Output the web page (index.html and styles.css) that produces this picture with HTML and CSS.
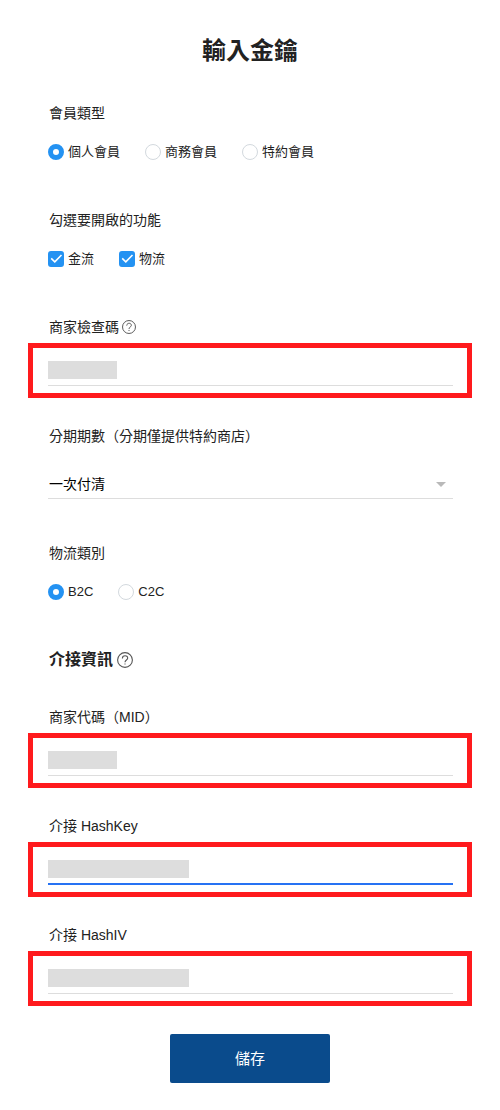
FILE: index.html
```html
<!DOCTYPE html>
<html lang="zh-Hant">
<head>
    <meta charset="UTF-8">
    <meta name="viewport" content="width=device-width, initial-scale=1.0">
    <title>輸入金鑰</title>
    <link rel="stylesheet" href="styles.css">
</head>
<body>

    <main>
        <form class="key-form">
            <h1>輸入金鑰</h1>

            <fieldset class="group">
                <legend>會員類型</legend>
                <div class="options">
                    <label class="option"><input type="radio" name="member" checked>個人會員</label>
                    <label class="option"><input type="radio" name="member">商務會員</label>
                    <label class="option"><input type="radio" name="member">特約會員</label>
                </div>
            </fieldset>

            <fieldset class="group">
                <legend>勾選要開啟的功能</legend>
                <div class="options">
                    <label class="option">
                        <span class="check">
                            <input type="checkbox" name="payment" checked>
                            <svg viewBox="0 0 16 16"><path d="M3.2 7.4 L6.8 10.8 L13.5 4"/></svg>
                        </span>金流
                    </label>
                    <label class="option">
                        <span class="check">
                            <input type="checkbox" name="logistics" checked>
                            <svg viewBox="0 0 16 16"><path d="M3.2 7.4 L6.8 10.8 L13.5 4"/></svg>
                        </span>物流
                    </label>
                </div>
            </fieldset>

            <div class="field">
                <div class="field-title">
                    <label for="check-code">商家檢查碼</label>
                    <button type="button" class="help" aria-label="說明">
                        <svg viewBox="0 0 16 16"><circle cx="8" cy="8" r="7.4"/><path d="M5.4 6.4 C5.4 2.9 10.7 2.9 10.7 6.1 C10.7 8 8 8 8 10.2"/><path d="M8 11.4 V12.6"/></svg>
                    </button>
                </div>
                <div class="highlight">
                    <input type="text" id="check-code">
                    <span class="mask"></span>
                </div>
            </div>

            <div class="field select-field">
                <label for="installment">分期期數<span class="paren" lang="ja">（</span>分期僅提供特約商店<span class="paren" lang="ja">）</span></label>
                <div class="select-box">
                    <select id="installment">
                        <option>一次付清</option>
                    </select>
                    <svg class="arrow" viewBox="0 0 10 5"><path d="M0 0 H10 L5 5 Z"/></svg>
                </div>
            </div>

            <fieldset class="group">
                <legend>物流類別</legend>
                <div class="options">
                    <label class="option"><input type="radio" name="shipping" checked>B2C</label>
                    <label class="option"><input type="radio" name="shipping">C2C</label>
                </div>
            </fieldset>

            <div class="section-title">
                <h2>介接資訊</h2>
                <button type="button" class="help help-large" aria-label="說明">
                    <svg viewBox="0 0 16 16"><circle cx="8" cy="8" r="7.4"/><path d="M5.4 6.4 C5.4 2.9 10.7 2.9 10.7 6.1 C10.7 8 8 8 8 10.2"/><path d="M8 11.4 V12.6"/></svg>
                </button>
            </div>

            <div class="field">
                <label for="mid">商家代碼<span class="paren" lang="ja">（</span>MID<span class="paren" lang="ja">）</span></label>
                <div class="highlight">
                    <input type="text" id="mid">
                    <span class="mask"></span>
                </div>
            </div>

            <div class="field">
                <label for="hash-key">介接 HashKey</label>
                <div class="highlight">
                    <input type="text" id="hash-key" class="active">
                    <span class="mask mask-long"></span>
                </div>
            </div>

            <div class="field">
                <label for="hash-iv">介接 HashIV</label>
                <div class="highlight">
                    <input type="text" id="hash-iv">
                    <span class="mask mask-long"></span>
                </div>
            </div>

            <button type="submit" class="save">儲存</button>
        </form>
    </main>

</body>
</html>
```

FILE: styles.css
```css
* {
    box-sizing: border-box;
}

body {
    margin: 0;
    background: #fff;
    color: #222;
    font-family: "Liberation Sans", "Noto Sans CJK TC", sans-serif;
    font-size: 14px;
    line-height: 20px;
}

input, select, button {
    font: inherit;
    color: inherit;
}

.key-form {
    display: flex;
    flex-direction: column;
    padding: 35px 28px 27px;
}

h1 {
    margin: 0 0 36px;
    font-size: 24px;
    font-weight: 600;
    line-height: 32px;
    text-align: center;
}

h2 {
    margin: 0;
    font-size: 16px;
    font-weight: 600;
    line-height: 20px;
}

/* Radio and checkbox groups */
.group {
    margin: 0 0 48px;
    padding: 0 20px;
    border: none;
}

legend {
    padding: 0 1px;
}

.options {
    display: flex;
    gap: 25px;
    margin-top: 19px;
}

.option {
    display: flex;
    align-items: center;
    gap: 4px;
    font-size: 13px;
}

.option input {
    appearance: none;
    width: 16px;
    height: 16px;
    margin: 0;
    border: 1px solid #d3d9de;
    border-radius: 50%;
    background: #fff;
}

.option input:checked {
    border: 5px solid #2492f2;
}

.check {
    display: grid;
}

.check input, .check svg {
    grid-area: 1 / 1;
    width: 16px;
    height: 16px;
}

.check input {
    border-radius: 3px;
}

.check input:checked {
    background: #2492f2;
}

.check svg {
    fill: none;
    stroke: #fff;
    stroke-width: 1.6;
    pointer-events: none;
}

/* Text fields */
.field {
    display: flex;
    flex-direction: column;
    margin-bottom: 28px;
}

.field > label, .field-title, .section-title {
    padding: 0 21px;
}

.field-title, .section-title {
    display: flex;
    align-items: center;
    gap: 4px;
}

.field-title {
    gap: 3px;
}

.section-title {
    margin-bottom: 37px;
}

/* Brackets sit against the text they enclose */
.paren {
    font-family: "Noto Sans CJK JP", sans-serif;
    line-height: 1;
}

.help {
    display: flex;
    width: 14px;
    height: 14px;
    padding: 0;
    border: none;
    background: none;
}

.help-large {
    width: 16px;
    height: 16px;
}

.help svg {
    width: 100%;
    fill: none;
    stroke: #555;
    stroke-width: 1.1;
}

.highlight {
    position: relative;
    display: flex;
    margin-top: 6px;
    padding: 0 14px 7px 15px;
    border: 5px solid #ff1a1d;
}

.highlight input {
    width: 100%;
    height: 38px;
    padding: 0;
    border: none;
    border-bottom: 1px solid #ddd;
    border-radius: 0;
    outline: none;
    background: none;
}

.highlight input.active {
    border-bottom: 2px solid #2672f3;
}

.mask {
    position: absolute;
    top: 13px;
    left: 15px;
    width: 69px;
    height: 18px;
    background: #ddd;
}

.mask-long {
    width: 141px;
}

/* Drop-down */
.select-field {
    margin-bottom: 44px;
}

.select-box {
    position: relative;
    margin: 23px 19px 0 20px;
}

.select-box select {
    display: block;
    appearance: none;
    width: 100%;
    height: 30px;
    padding: 0 1px;
    border: none;
    border-bottom: 1px solid #ddd;
    border-radius: 0;
    background: none;
    color: #000;
}

.arrow {
    position: absolute;
    top: 13px;
    right: 7px;
    width: 10px;
    height: 5px;
    fill: #b9b9b9;
    pointer-events: none;
}

.save {
    align-self: center;
    width: 160px;
    height: 49px;
    border: none;
    border-radius: 2px;
    background: #0a4b8c;
    color: #fff;
    font-size: 15px;
    cursor: pointer;
}
```
